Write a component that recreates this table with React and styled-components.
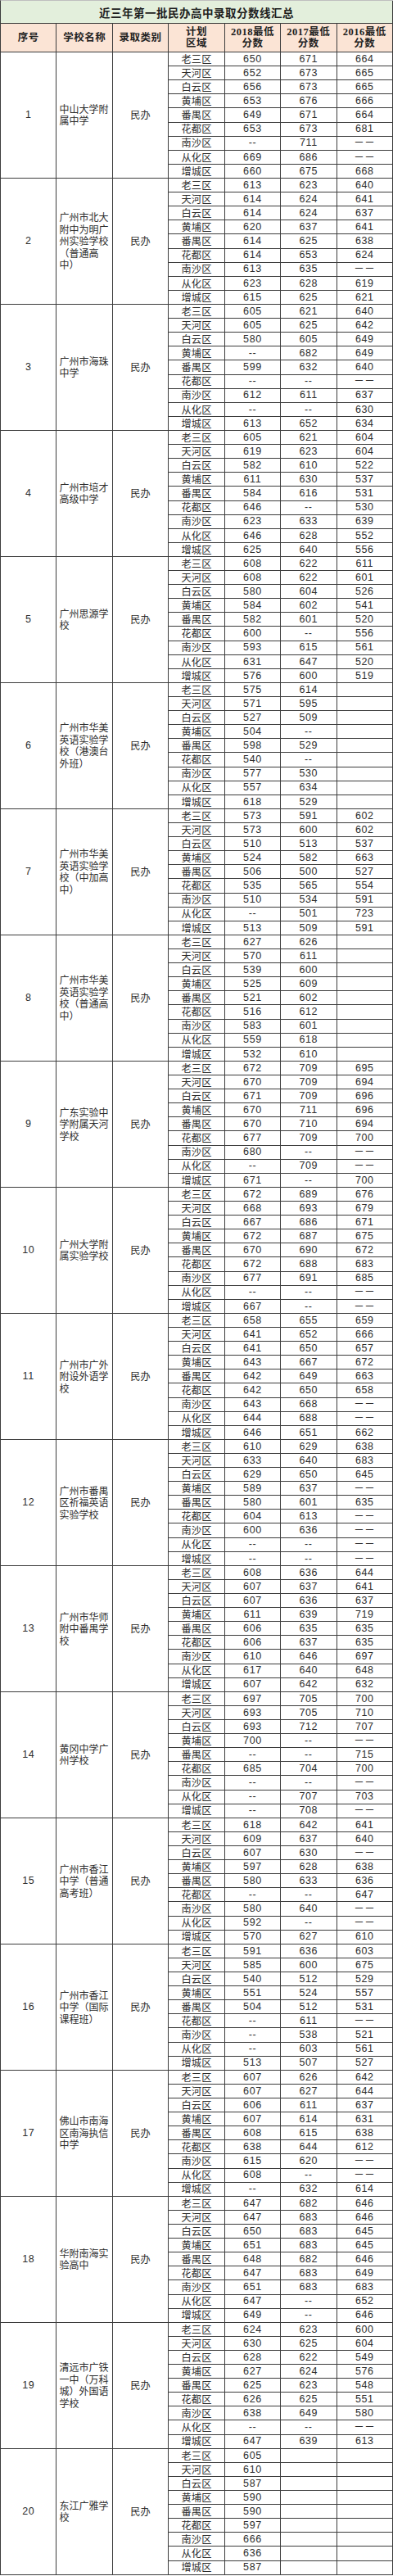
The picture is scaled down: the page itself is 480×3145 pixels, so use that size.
import React from "react";
import styled, { createGlobalStyle } from "styled-components";

const districts = ["老三区", "天河区", "白云区", "黄埔区", "番禺区", "花都区", "南沙区", "从化区", "增城区"];

// "-" = "--", "=" = "－－", "_" = empty cell
const schools = [
  ["中山大学附属中学", "650 671 664|652 673 665|656 673 665|653 676 666|649 671 664|653 673 681|- 711 =|669 686 =|660 675 668"],
  ["广州市北大附中为明广州实验学校（普通高中）", "613 623 640|614 624 641|614 624 637|620 637 641|614 625 638|614 653 624|613 635 =|623 628 619|615 625 621"],
  ["广州市海珠中学", "605 621 640|605 625 642|580 605 649|- 682 649|599 632 640|- - =|612 611 637|- - 630|613 652 634"],
  ["广州市培才高级中学", "605 621 604|619 623 604|582 610 522|611 630 537|584 616 531|646 - 530|623 633 639|646 628 552|625 640 556"],
  ["广州思源学校", "608 622 611|608 622 601|580 604 526|584 602 541|582 601 520|600 - 556|593 615 561|631 647 520|576 600 519"],
  ["广州市华美英语实验学校（港澳台外班）", "575 614 _|571 595 _|527 509 _|504 - _|598 529 _|540 - _|577 530 _|557 634 _|618 529 _"],
  ["广州市华美英语实验学校（中加高中）", "573 591 602|573 600 602|510 513 537|524 582 663|506 500 527|535 565 554|510 534 591|- 501 723|513 509 591"],
  ["广州市华美英语实验学校（普通高中）", "627 626 _|570 611 _|539 600 _|525 609 _|521 602 _|516 612 _|583 601 _|559 618 _|532 610 _"],
  ["广东实验中学附属天河学校", "672 709 695|670 709 694|671 709 696|670 711 696|670 710 694|677 709 700|680 - =|- 709 =|671 - 700"],
  ["广州大学附属实验学校", "672 689 676|668 693 679|667 686 671|672 687 675|670 690 672|672 688 683|677 691 685|- - =|667 - ="],
  ["广州市广外附设外语学校", "658 655 659|641 652 666|641 650 657|643 667 672|642 649 663|642 650 658|643 668 =|644 688 =|646 651 662"],
  ["广州市番禺区祈福英语实验学校", "610 629 638|633 640 683|629 650 645|589 637 =|580 601 635|604 613 =|600 636 =|- - =|- - ="],
  ["广州市华师附中番禺学校", "608 636 644|607 637 641|607 636 637|611 639 719|606 635 635|606 637 635|610 646 697|617 640 648|607 642 632"],
  ["黄冈中学广州学校", "697 705 700|693 705 710|693 712 707|700 - =|- - 715|685 704 700|- - =|- 707 703|- 708 ="],
  ["广州市香江中学（普通高考班）", "618 642 641|609 637 640|607 630 =|597 628 638|580 633 636|- - 647|580 640 =|592 - =|570 627 610"],
  ["广州市香江中学（国际课程班）", "591 636 603|585 600 675|540 512 529|551 524 557|504 512 531|- 611 =|- 538 521|- 603 561|513 507 527"],
  ["佛山市南海区南海执信中学", "607 626 642|607 627 644|606 611 637|607 614 631|608 615 638|638 644 612|615 620 =|608 - =|- 632 614"],
  ["华附南海实验高中", "647 682 646|647 683 646|650 683 645|651 683 645|648 682 646|647 683 649|651 683 683|647 - 652|649 - 646"],
  ["清远市广铁一中（万科城）外国语学校", "624 623 600|630 625 604|628 622 549|627 624 576|625 623 548|626 625 551|638 649 580|- - =|647 639 613"],
  ["东江广雅学校", "605 _ _|610 _ _|587 _ _|590 _ _|590 _ _|597 _ _|666 _ _|636 _ _|587 _ _"],
];

const cellText = (t) => (t === "-" ? "--" : t === "=" ? "－－" : t === "_" ? "" : t);

const GlobalStyle = createGlobalStyle`
  body {
    margin: 0;
    background: #ffffff;
  }
`;

const Table = styled.div`
  width: 480px;
  box-sizing: border-box;
  border-left: 1px solid #3c3c3c;
  border-top: 1px solid #bfbfbf;
  font-family: "Liberation Sans", "Noto Sans CJK SC", sans-serif;
  color: #2a2a2a;
`;

const Title = styled.div`
  height: 28px;
  box-sizing: border-box;
  display: flex;
  align-items: center;
  justify-content: center;
  background: #e3efdc;
  border-right: 1px solid #3c3c3c;
  border-bottom: 1px solid #3c3c3c;
  font-family: "Noto Sans CJK SC", sans-serif;
  font-weight: 700;
  font-size: 13.5px;
  letter-spacing: 0.5px;
  color: #1e1e1e;
`;

const Grid = styled.div`
  display: grid;
  grid-template-columns: repeat(7, 1fr);
  grid-template-rows: ${(p) => p.$rows};
`;

const HeadCell = styled.div`
  box-sizing: border-box;
  display: flex;
  align-items: center;
  justify-content: center;
  text-align: center;
  background: #fbe4d5;
  border-right: 1px solid #3c3c3c;
  border-bottom: 1px solid #3c3c3c;
  font-family: "Liberation Serif", "Noto Sans CJK SC", serif;
  font-weight: 700;
  font-size: 12.5px;
  line-height: 14px;
  letter-spacing: 0.5px;
  color: #222;
`;

const Cell = styled.div`
  box-sizing: border-box;
  min-width: 0;
  display: flex;
  align-items: center;
  justify-content: ${(p) => (p.$left ? "flex-start" : "center")};
  padding: ${(p) => (p.$left ? "0 0 0 3px" : "0")};
  grid-row: ${(p) => (p.$span ? "span 9" : "auto")};
  border-right: 1px solid #3c3c3c;
  border-bottom: 1px solid #3c3c3c;
  font-family: ${(p) => (p.$cjk ? `"Noto Sans CJK SC", sans-serif` : `"Liberation Sans", "Noto Sans CJK SC", sans-serif`)};
  font-size: ${(p) => (p.$cjk ? "12.2px" : "12.5px")};
  letter-spacing: ${(p) => (p.$cjk ? "0.2px" : "0.6px")};
  line-height: 14.5px;
  color: #2d2d2d;
`;

const Name = styled.span`
  display: block;
  width: 100%;
  font-size: 12px;
  letter-spacing: 0;
  line-break: strict;
`;

function School({ index, name, data }) {
  const rows = data.split("|").map((r) => r.split(" "));
  return (
    <Grid $rows="repeat(9, 17.117px)">
      <Cell $span>{index}</Cell>
      <Cell $span $left $cjk>
        <Name>{name}</Name>
      </Cell>
      <Cell $span $cjk>民办</Cell>
      {rows.map((r, i) => (
        <React.Fragment key={i}>
          <Cell $cjk>{districts[i]}</Cell>
          {r.map((v, j) => (
            <Cell key={j}>{cellText(v)}</Cell>
          ))}
        </React.Fragment>
      ))}
    </Grid>
  );
}

export default function App() {
  return (
    <>
      <GlobalStyle />
      <Table>
        <Title>近三年第一批民办高中录取分数线汇总</Title>
        <Grid $rows="35px">
          <HeadCell>序号</HeadCell>
          <HeadCell>学校名称</HeadCell>
          <HeadCell>录取类别</HeadCell>
          <HeadCell>计划<br />区域</HeadCell>
          <HeadCell>2018最低<br />分数</HeadCell>
          <HeadCell>2017最低<br />分数</HeadCell>
          <HeadCell>2016最低<br />分数</HeadCell>
        </Grid>
        {schools.map(([name, data], i) => (
          <School key={i} index={i + 1} name={name} data={data} />
        ))}
      </Table>
    </>
  );
}
